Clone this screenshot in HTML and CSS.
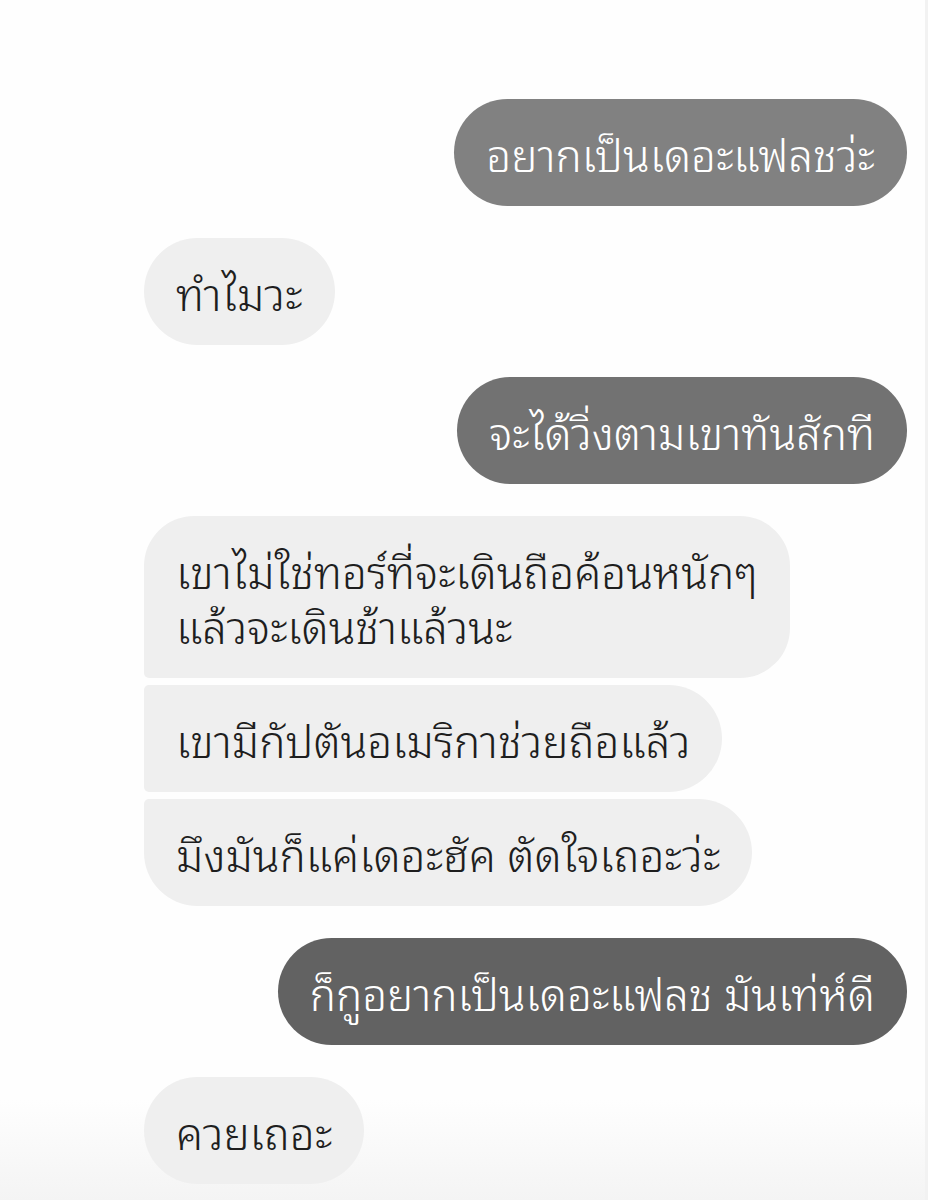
FILE: index.html
```html
<!DOCTYPE html>
<html lang="th">
<head>
    <meta charset="UTF-8">
    <meta name="viewport" content="width=device-width, initial-scale=1.0">
    <title>แชท</title>
    <link rel="stylesheet" href="styles.css">
</head>
<body>
    <div class="chat">
        <div class="group sent">
            <div class="bubble tone-1">อยากเป็นเดอะแฟลชว่ะ</div>
        </div>
        <div class="group received">
            <div class="bubble">ทำไมวะ</div>
        </div>
        <div class="group sent">
            <div class="bubble tone-2">จะได้วิ่งตามเขาทันสักที</div>
        </div>
        <div class="group received">
            <div class="bubble first">เขาไม่ใช่ทอร์ที่จะเดินถือค้อนหนักๆ<br>แล้วจะเดินช้าแล้วนะ</div>
            <div class="bubble middle">เขามีกัปตันอเมริกาช่วยถือแล้ว</div>
            <div class="bubble last">มึงมันก็แค่เดอะฮัค ตัดใจเถอะว่ะ</div>
        </div>
        <div class="group sent">
            <div class="bubble tone-3">ก็กูอยากเป็นเดอะแฟลช มันเท่ห์ดี</div>
        </div>
        <div class="group received">
            <div class="bubble">ควยเถอะ</div>
        </div>
    </div>
</body>
</html>
```

FILE: styles.css
```css
body {
    margin: 0;
    background-color: #fefefe;
    font-family: "Noto Sans Thai Looped", "Noto Serif Thai", "Noto Sans Thai", "Noto Sans", sans-serif;
}
.chat {
    display: flex;
    flex-direction: column;
    gap: 32px;
    padding: 99px 18px 20px 144px;
    border-right: 3px solid #f2f2f2;
    min-height: 1080px;
    background: linear-gradient(to bottom, #fefefe 1100px, #f4f4f4 1200px);
}
.group {
    display: flex;
    flex-direction: column;
    gap: 7px;
}
.sent {
    align-items: flex-end;
}
.received {
    align-items: flex-start;
}
.bubble {
    padding: 26px 32px;
    font-size: 44px;
    font-weight: 300;
    line-height: 55px;
    border-radius: 54px;
    color: #1e1e1e;
    background-color: #efefef;
}
.sent .bubble {
    color: #ffffff;
}
.tone-1 {
    background-color: #818181;
}
.tone-2 {
    background-color: #727272;
}
.tone-3 {
    background-color: #626262;
}
.received .first {
    border-radius: 50px 50px 50px 5px;
}
.received .middle {
    border-radius: 5px 54px 54px 5px;
}
.received .last {
    border-radius: 5px 54px 54px 54px;
}
```
